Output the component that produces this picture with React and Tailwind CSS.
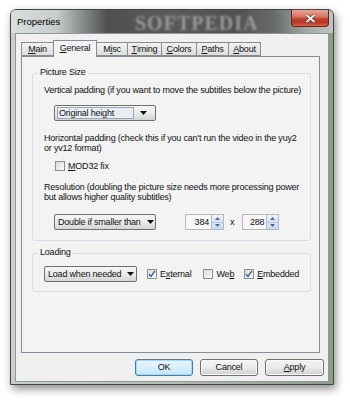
import React from 'react';

const font = { fontFamily: '"Liberation Sans", Arial, sans-serif' };

// Underlined accelerator letter
function Acc({ children }) {
  return <span className="underline underline-offset-[1px] decoration-[0.5px]">{children}</span>;
}

function Check({ checked }) {
  return (
    <span className="w-[10px] h-[10px] border border-[#8e8f8f] bg-gradient-to-br from-[#d9d9d9] to-[#fbfbfb] flex items-center justify-center shrink-0">
      {checked ? (
        <svg width="8" height="8" viewBox="0 0 8 8">
          <path d="M1 4.2 L3 6.3 L7 0.8" fill="none" stroke="#3b5aa5" strokeWidth="1.4" />
        </svg>
      ) : null}
    </span>
  );
}

function Combo({ width, children, focus }) {
  return (
    <div className={`${width} h-[16px] border border-[#707070] rounded-[2px] bg-gradient-to-b from-[#f4f4f4] via-[#ebebeb] to-[#d4d4d4] flex items-center pl-[2px] pr-[8px] whitespace-nowrap`}>
      <span className={`flex-1 h-[12px] flex items-center pl-[1px] leading-none ${focus ? 'border border-[#9aa6b6] bg-[#e9eef4]' : ''}`}>{children}</span>
      <svg width="7" height="4" viewBox="0 0 7 4" className="ml-[6px] shrink-0">
        <path d="M0 0 L7 0 L3.5 4 Z" fill="#111" />
      </svg>
    </div>
  );
}

function Spin({ value, inputW }) {
  return (
    <div className="flex h-[16px]">
      <div className={`${inputW} border border-[#b5b8bd] bg-[#f7f7f7] flex items-center justify-end pr-[2px] leading-none`}>{value}</div>
      <div className="w-[12px] flex flex-col border border-[#b5b8bd] border-l-0">
        <div className="flex-1 bg-gradient-to-b from-[#eef4fb] to-[#d4e3f3] flex items-center justify-center border-b border-[#b8c8da]">
          <svg width="5" height="3" viewBox="0 0 5 3"><path d="M0 3 L5 3 L2.5 0 Z" fill="#4d6a96" /></svg>
        </div>
        <div className="flex-1 bg-gradient-to-b from-[#dce8f5] to-[#c8daee] flex items-center justify-center">
          <svg width="5" height="3" viewBox="0 0 5 3"><path d="M0 0 L5 0 L2.5 3 Z" fill="#4d6a96" /></svg>
        </div>
      </div>
    </div>
  );
}

function GroupBox({ label, className, children }) {
  return (
    <div className={`relative border border-[#d5dfe5] rounded-[3px] ${className}`}>
      <span className="absolute -top-[6px] left-[5px] bg-[#f3f3f3] px-[2px] leading-none">{label}</span>
      {children}
    </div>
  );
}

const tabs = [
  { name: 'Main', acc: 0, w: 'w-[33px]' },
  { name: 'General', acc: 0, w: 'w-[44px]', active: true },
  { name: 'Misc', acc: 1, w: 'w-[32px]' },
  { name: 'Timing', acc: 0, w: 'w-[35px]' },
  { name: 'Colors', acc: 0, w: 'w-[36px]' },
  { name: 'Paths', acc: 0, w: 'w-[33px]' },
  { name: 'About', acc: 0, w: 'w-[33px]' },
];

function Button({ children, primary, w }) {
  return (
    <div className={`${w} h-[17px] rounded-[3px] border flex items-center justify-center ${primary ? 'border-[#3c7fb1] bg-gradient-to-b from-[#eaf6fd] via-[#d9f0fc] to-[#bee6fd] shadow-[inset_0_0_0_1px_#a8d8f5]' : 'border-[#707070] bg-gradient-to-b from-[#f2f2f2] via-[#ebebeb] to-[#cfcfcf] shadow-[inset_0_0_0_1px_#fbfbfb]'}`}>
      {children}
    </div>
  );
}

export default function App() {
  return (
    <div className="w-[350px] h-[402px] bg-white overflow-hidden text-[9px] tracking-[-0.2px] text-[#111]" style={font}>
      {/* Window */}
      <div className="ml-[10px] mt-[9px] w-[324px] h-[376px] rounded-t-[6px] border border-[#3e4646] bg-gradient-to-r from-[#c9cece] via-[#b7bcb6] to-[#8e9c84] shadow-[2px_4px_9px_rgba(0,0,0,0.45)] flex flex-col">
        {/* Title bar */}
        <div className="relative h-[23px] rounded-t-[5px] bg-[linear-gradient(to_right,#dadede_0%,#c8cccc_14%,#8a8e8e_22%,#4e5050_30%,#5a5a5a_50%,#505050_70%,#6a6c6c_82%,#a4aaaa_92%,#bfc4c4_100%)] flex items-start justify-between overflow-hidden">
          <span className="absolute left-[124px] top-[3px] text-[20px] leading-none font-bold tracking-[1px] text-[#9a9a9a] blur-[1.2px]" style={{ fontFamily: '"Liberation Serif", serif' }}>SOFTPEDIA</span>
          <span className="relative ml-[6px] mt-[7px] text-[9.5px] leading-none tracking-normal text-black">Properties</span>
          <div className="relative mr-[4px] w-[38px] h-[17px] rounded-b-[4px] border border-t-0 border-[#5a2a22] bg-[linear-gradient(to_bottom,#e9a594_0%,#d4705c_45%,#c0402c_55%,#b8382a_80%,#d06a50_100%)] flex items-center justify-center">
            <svg width="11" height="9" viewBox="0 0 11 9">
              <path d="M1.5 1 L9.5 8 M9.5 1 L1.5 8" stroke="#5a2a22" strokeWidth="3" />
              <path d="M1.5 1 L9.5 8 M9.5 1 L1.5 8" stroke="#fff" strokeWidth="1.8" />
            </svg>
          </div>
        </div>

        {/* Client area */}
        <div className="mx-[4px] h-[349px] border border-[#8f9898] bg-[#f0f0f0] flex flex-col">
          {/* Tabs */}
          <div className="pl-[5px] pt-[5px] h-[22px] flex items-end relative z-10">
            {tabs.map((t, i) => (
              <div
                key={t.name}
                className={`${t.w} ${i > 0 ? '-ml-[1px]' : ''} flex items-center justify-center border border-[#898c95] leading-none ${t.active ? 'h-[17px] -mb-[1px] border-b-0 bg-[#f3f3f3] relative z-10 pb-[2px]' : 'h-[14px] bg-gradient-to-b from-[#f2f2f2] to-[#dedede]'}`}
              >
                {t.name.slice(0, t.acc)}<Acc>{t.name[t.acc]}</Acc>{t.name.slice(t.acc + 1)}
              </div>
            ))}
          </div>

          {/* Tab panel */}
          <div className="ml-[5px] w-[299px] h-[297px] border border-[#898c95] bg-[#f3f3f3] pl-[10px] pt-[16px]">
            <GroupBox label="Picture Size" className="w-[279px] h-[168px] pl-[11px] pt-[11px]">
              <div className="leading-[10px] whitespace-nowrap">Vertical padding (if you want to move the subtitles below the picture)</div>
              <div className="ml-[10px] mt-[10px]">
                <Combo width="w-[102px]" focus>Original height</Combo>
              </div>
              <div className="mt-[12px] leading-[10px] whitespace-nowrap">
                Horizontal padding (check this if you can't run the video in the yuy2<br />or yv12 format)
              </div>
              <div className="ml-[11px] mt-[8px] flex items-center gap-[3px] leading-none">
                <Check />
                <span><Acc>M</Acc>OD32 fix</span>
              </div>
              <div className="mt-[11px] leading-[10px] whitespace-nowrap">
                Resolution (doubling the picture size needs more processing power<br />but allows higher quality subtitles)
              </div>
              <div className="ml-[10px] mt-[12px] flex items-center">
                <Combo width="w-[102px]">Double if smaller than</Combo>
                <div className="ml-[29px]"><Spin value="384" inputW="w-[27px]" /></div>
                <span className="ml-[6px] mr-[8px] leading-none">x</span>
                <Spin value="288" inputW="w-[25px]" />
              </div>
            </GroupBox>

            <GroupBox label="Loading" className="mt-[12px] w-[279px] h-[39px] pl-[11px] pt-[12px]">
              <div className="flex items-center leading-none">
                <Combo width="w-[93px]">Load when needed</Combo>
                <div className="ml-[10px] flex items-center gap-[3px]">
                  <Check checked />
                  <span>E<Acc>x</Acc>ternal</span>
                </div>
                <div className="ml-[12px] flex items-center gap-[3px]">
                  <Check />
                  <span>We<Acc>b</Acc></span>
                </div>
                <div className="ml-[10px] flex items-center gap-[3px]">
                  <Check checked />
                  <span><Acc>E</Acc>mbedded</span>
                </div>
              </div>
            </GroupBox>
          </div>

          {/* Buttons */}
          <div className="mt-[6px] pr-[4px] flex justify-end gap-[7px] leading-none">
            <Button primary w="w-[58px]">OK</Button>
            <Button w="w-[58px]">Cancel</Button>
            <Button w="w-[59px]"><span><Acc>A</Acc>pply</span></Button>
          </div>
        </div>
      </div>
    </div>
  );
}
